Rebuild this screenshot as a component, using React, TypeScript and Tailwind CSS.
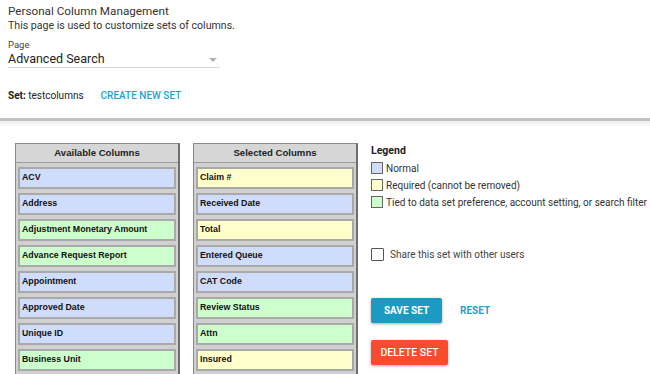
import React from 'react';

type Kind = 'n' | 'r' | 't';

const bg: Record<Kind, string> = {
  n: 'bg-[#cfdcfc]',
  r: 'bg-[#ffffcc]',
  t: 'bg-[#ccffcc]',
};

const available: [string, Kind][] = [
  ['ACV', 'n'],
  ['Address', 'n'],
  ['Adjustment Monetary Amount', 't'],
  ['Advance Request Report', 't'],
  ['Appointment', 'n'],
  ['Approved Date', 'n'],
  ['Unique ID', 'n'],
  ['Business Unit', 't'],
];

const selected: [string, Kind][] = [
  ['Claim #', 'r'],
  ['Received Date', 'n'],
  ['Total', 'r'],
  ['Entered Queue', 'n'],
  ['CAT Code', 'n'],
  ['Review Status', 't'],
  ['Attn', 't'],
  ['Insured', 'r'],
];

const ColumnBox = ({ title, items }: { title: string; items: [string, Kind][] }) => (
  <div className="w-[165px] shrink-0 border border-[#8a8a8a] border-r-2 border-r-[#6e6e6e] bg-[#d0d0d0] font-[Liberation_Sans,Arial,sans-serif]">
    <div className="h-[19px] flex items-center justify-center text-[9.6px] font-bold text-[#222] bg-[#d6d6d6] border-b border-[#9a9a9a]">
      {title}
    </div>
    <div className="flex flex-col gap-[4px] px-[2px] pt-[4px] pb-[4px]">
      {items.map(([label, k]) => (
        <div
          key={label}
          className={`h-[22px] flex items-center pl-[2px] whitespace-nowrap text-[8.8px] font-bold text-[#111] border-2 border-[#a9a9a9] ${bg[k]}`}
        >
          {label}
        </div>
      ))}
    </div>
  </div>
);

const Swatch = ({ k }: { k: Kind }) => (
  <span className={`inline-block shrink-0 w-[12px] h-[12px] border border-[#666] ${bg[k]}`}></span>
);

export default function App() {
  return (
    <div className="w-[650px] h-[374px] overflow-hidden bg-white font-['Roboto',sans-serif] text-[#333]">
      {/* Top */}
      <div className="px-[8px] pt-[3px]">
        <div className="text-[11.7px] leading-[16px]">Personal Column Management</div>
        <div className="text-[10.6px] leading-[14px]">This page is used to customize sets of columns.</div>
        <div className="mt-[6px] text-[9.5px] leading-[11px] text-[#444]">Page</div>
        <div className="w-[212px] h-[18px] flex items-center justify-between border-b border-[#d8d8d8] pr-[3px]">
          <span className="text-[12.5px] leading-[15px] text-[#222]">Advanced Search</span>
          <span className="w-0 h-0 border-l-[4px] border-r-[4px] border-t-[4px] border-l-transparent border-r-transparent border-t-[#b0b0b0] mt-[2px]"></span>
        </div>
        <div className="mt-[21px] flex items-center text-[10px] leading-[14px]">
          <span className="text-[#222]"><span className="font-bold">Set:</span> testcolumns</span>
          <span className="ml-[17px] font-medium text-[#2a9fd0]">CREATE NEW SET</span>
        </div>
      </div>

      {/* Divider */}
      <div className="mt-[15px] h-[3px] bg-[#c2c2c2]"></div>
      <div className="h-[6px] bg-gradient-to-b from-[#ececec] to-white"></div>

      {/* Main */}
      <div className="flex pl-[15px] pt-[16px]">
        <ColumnBox title="Available Columns" items={available} />
        <div className="w-[13px] shrink-0"></div>
        <ColumnBox title="Selected Columns" items={selected} />

        <div className="ml-[13px] pt-[1px] text-[10px] text-[#333] whitespace-nowrap">
          <div className="font-bold text-[10.5px] leading-[14px] text-[#222]">Legend</div>
          <div className="mt-[3px] flex flex-col gap-[3px]">
            <div className="flex items-center gap-[3px] h-[14px]"><Swatch k="n" />Normal</div>
            <div className="flex items-center gap-[3px] h-[14px]"><Swatch k="r" />Required (cannot be removed)</div>
            <div className="flex items-center gap-[3px] h-[14px]"><Swatch k="t" />Tied to data set preference, account setting, or search filter</div>
          </div>

          <div className="mt-[38px] flex items-center gap-[6px] h-[15px]">
            <span className="inline-block w-[13px] h-[13px] border border-[#555] rounded-[1px]"></span>
            <span className="text-[#444]">Share this set with other users</span>
          </div>

          <div className="mt-[36px] flex items-center">
            <button className="w-[71px] h-[25px] bg-[#1a9bc1] text-white text-[10px] font-bold rounded-[2px] shadow-[0_1px_3px_rgba(0,0,0,0.35)]">
              SAVE SET
            </button>
            <span className="ml-[18px] text-[10px] font-bold text-[#2aa0d0]">RESET</span>
          </div>

          <div className="mt-[17px]">
            <button className="w-[77px] h-[25px] bg-[#f94b2e] text-white text-[10.5px] font-medium rounded-[2px] shadow-[0_1px_3px_rgba(0,0,0,0.35)]">
              DELETE SET
            </button>
          </div>
        </div>
      </div>
    </div>
  );
}
